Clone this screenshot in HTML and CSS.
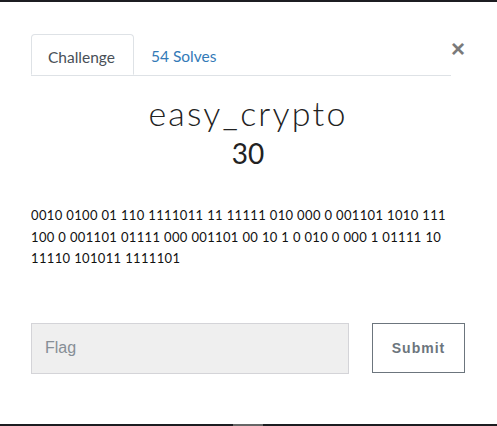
FILE: index.html
```html
<!DOCTYPE html>
<html>
<head>
<meta charset="utf-8">
<link rel="stylesheet" href="styles.css">
</head>
<body>
<div class="top-strip"></div>
<div class="modal">
  <button class="close" aria-label="Close">&times;</button>
  <div class="tabs">
    <div class="tab active">Challenge</div>
    <div class="tab link">54 Solves</div>
  </div>
  <h2 class="title">easy_crypto</h2>
  <h3 class="points">30</h3>
  <p class="desc">0010 0100 01 110 1111011 11 11111 010 000 0 001101 1010 111 100 0 001101 01111 000 001101 00 10 1 0 010 0 000 1 01111 10 11110 101011 1111101</p>
  <div class="form-row">
    <input class="flag" type="text" placeholder="Flag">
    <button class="submit">Submit</button>
  </div>
</div>
<div class="bottom-strip"><span class="thumb"></span></div>
</body>
</html>
```

FILE: styles.css
```css
html, body {
  margin: 0;
  padding: 0;
  background: #fff;
  width: 497px;
  height: 426px;
  overflow: hidden;
}
body {
  font-family: Lato, "Open Sans", sans-serif;
  color: #212529;
  display: flex;
  flex-direction: column;
}
.top-strip {
  height: 2px;
  background: #1c1d21;
  flex: none;
}
.modal {
  position: relative;
  height: 422px;
  padding: 32px 32px 0 31px;
  box-sizing: border-box;
  flex: none;
}
.close {
  position: absolute;
  top: 35px;
  right: 32px;
  border: none;
  background: none;
  padding: 0;
  font-family: "Liberation Sans", Arial, sans-serif;
  font-size: 24px;
  font-weight: bold;
  line-height: 24px;
  color: #7a7a7a;
}
.tabs {
  display: flex;
  border-bottom: 1px solid #dee2e6;
  height: 41px;
  width: 420px;
}
.tab {
  font-size: 15.5px;
  line-height: 44px;
  height: 41px;
  box-sizing: border-box;
}
.tab.active {
  border: 1px solid #dee2e6;
  border-bottom-color: #fff;
  border-radius: 4px 4px 0 0;
  color: #495057;
  width: 103px;
  padding: 0 0 0 16px;
}
.tab.link {
  color: #337ab7;
  padding-left: 17px;
}
.title {
  margin: 19px 0 0 0;
  text-align: center;
  font-weight: 300;
  font-size: 34px;
  letter-spacing: 2.2px;
  line-height: 36px;
  color: #222;
  width: 434px;
}
.points {
  margin: 5px 0 0 0;
  text-align: center;
  font-weight: 400;
  font-size: 28px;
  line-height: 34px;
  color: #222;
  width: 434px;
}
.desc {
  margin: 35px 0 0 0;
  font-size: 13px;
  letter-spacing: 0.35px;
  line-height: 21.5px;
  color: #111;
  width: 434px;
}
.form-row {
  display: flex;
  align-items: flex-start;
  gap: 23px;
  margin-top: 53px;
}
.flag {
  flex: none;
  width: 318px;
  height: 51px;
  box-sizing: border-box;
  background: #efefef;
  border: 1px solid #d4d4d8;
  padding: 0 13px;
  font-family: "Liberation Sans", Arial, sans-serif;
  font-size: 16px;
  color: #6c757d;
  outline: none;
  margin: 0;
}
.flag::placeholder {
  color: #868e96;
}
.submit {
  flex: none;
  width: 93px;
  height: 50px;
  box-sizing: border-box;
  background: #fff;
  border: 1px solid #6c757d;
  font-family: "Liberation Sans", Arial, sans-serif;
  font-weight: bold;
  font-size: 14px;
  letter-spacing: 1px;
  color: #6c757d;
  margin: 0;
  padding: 0;
}
.bottom-strip {
  height: 2px;
  background: #1c1d21;
  position: relative;
  flex: none;
}
.thumb {
  position: absolute;
  left: 233px;
  top: 0;
  width: 30px;
  height: 2px;
  background: #666;
}
```
